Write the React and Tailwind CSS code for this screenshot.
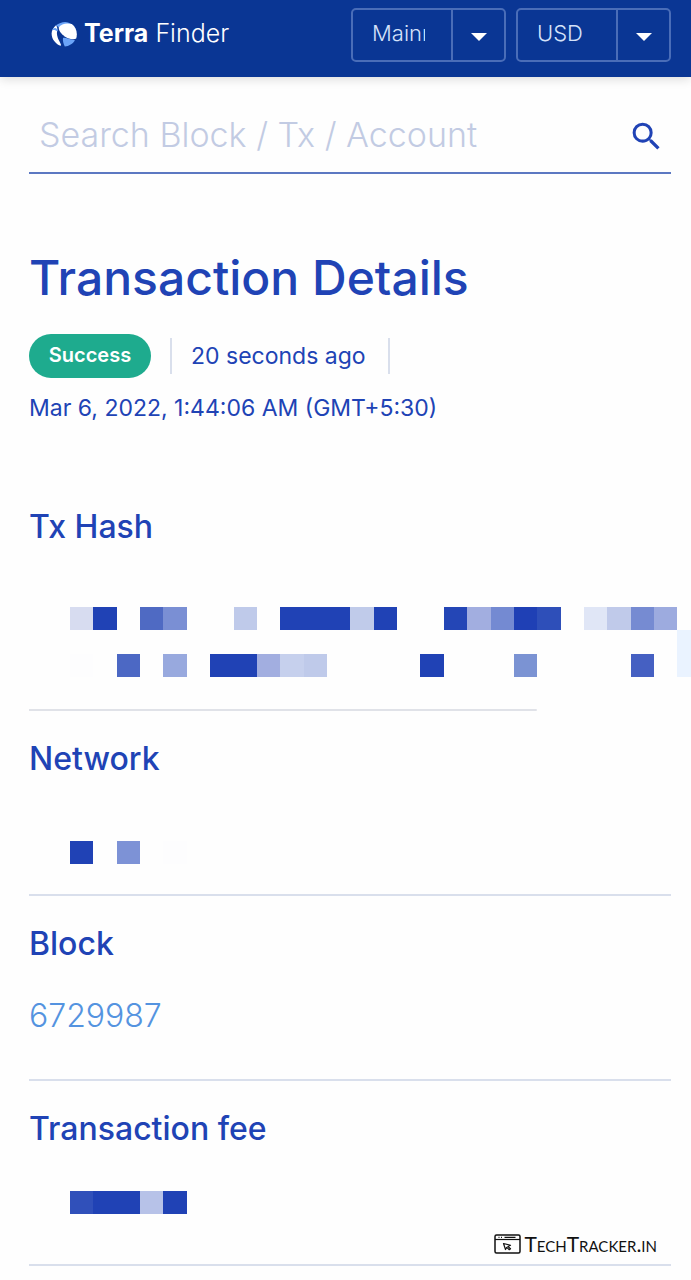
import React from "react";

const CELL = 23.365;
const INK = "#2042b5";

const HASH_CELLS = [
  [0, 0, 1, "#d7dcf0"],
  [1, 0, 1, INK],
  [3, 0, 1, "#4f6ac3"],
  [4, 0, 1, "#7a8fd4"],
  [7, 0, 1, "#bfcaea"],
  [9, 0, 3, INK],
  [12, 0, 1, "#c0cbea"],
  [13, 0, 1, INK],
  [16, 0, 1, "#2446b6"],
  [17, 0, 1, "#a2aee0"],
  [18, 0, 1, "#748ad2"],
  [19, 0, 1, "#1f40b5"],
  [20, 0, 1, "#2e4fb9"],
  [22, 0, 1, "#e0e6f6"],
  [23, 0, 1, "#c0caea"],
  [24, 0, 1, "#768bd2"],
  [25, 0, 1, "#9dabdf"],
  [26, 1, 1, "#eaf3ff"],
  [26, 2, 1, "#eaf3ff"],
  [0, 2, 1, "#fdfdfe"],
  [2, 2, 1, "#4c68c4"],
  [4, 2, 1, "#98a9de"],
  [6, 2, 2, INK],
  [8, 2, 1, "#a2aee0"],
  [9, 2, 1, "#c6d0ed"],
  [10, 2, 1, "#bfcaea"],
  [15, 2, 1, INK],
  [19, 2, 1, "#7b93d3"],
  [24, 2, 1, "#4560c2"],
];

const NETWORK_CELLS = [
  [0, 0, 1, INK],
  [2, 0, 1, "#7d92d6"],
  [4, 0, 1, "#fdfdfe"],
];

const FEE_CELLS = [
  [0, 0, 1, "#3050ba"],
  [1, 0, 2, INK],
  [3, 0, 1, "#b7c2e8"],
  [4, 0, 1, INK],
];

function Mosaic({ cells, cols, rows, label }) {
  return (
    <svg
      className="block shrink-0"
      width={Math.ceil(cols * CELL)}
      height={Math.ceil(rows * CELL)}
      role="img"
      aria-label={label}
      shapeRendering="crispEdges"
    >
      {cells.map(([x, y, span, fill]) => (
        <rect key={`${x}-${y}`} x={x * CELL} y={y * CELL} width={span * CELL} height={CELL} fill={fill} />
      ))}
    </svg>
  );
}

function Logo() {
  return (
    <svg className="size-[26px]" viewBox="0 0 26 26" aria-hidden="true">
      <path d="M5 4.300C10 .2 17 -.4 20.800 3.500 15.500 3 11.500 3.800 8.600 7 7.300 6 6 5.300 5 4.300Z" fill="#6ba4f8" />
      <path d="M7.800 6.300C10 2.800 16 1.400 20.800 3.100 25.300 6.300 26.800 12 25.200 17.600 23.600 19 19 18.400 15 16.300 11 14 7.200 9.800 7.800 6.300Z" fill="#fff" />
      <path d="M12 17C14 16.200 18 18.200 24 19.200 21.900 22.800 18 25.200 13.800 25.400 12.500 23 11.500 19.500 12 17Z" fill="#6ba4f8" />
      <path d="M5 4.300C2.600 6.300.7 9.300.6 12.500.7 15.500 1.600 18 3.200 20 5.200 22.600 7.500 24.300 9.800 24.800 10.800 23.500 8 20.500 6.700 16.500 5.700 13.500 5.800 11 6.300 9 6.500 7 6 5.500 5 4.300Z" fill="#fff" />
      <path d="M2.200 7.600C3.500 6.600 5.300 7 6.700 8.600L6.500 10.600C4.500 9 3 8.600 1.400 9.400Z" fill="#6ba4f8" />
    </svg>
  );
}

function HeaderSelect({ label, options }) {
  return (
    <label className="grid h-[54px] w-[155px] rounded-[5px] border-2 border-[#4a6db8]">
      <span className="sr-only">{label}</span>
      <select className="col-start-1 row-start-1 w-full appearance-none bg-transparent pr-[79px] pb-1 pl-[19px] text-[22px] font-light text-[#d5e2fa] outline-none">
        {options.map((option) => (
          <option key={option}>{option}</option>
        ))}
      </select>
      <span className="pointer-events-none col-start-1 row-start-1 flex w-[53px] items-center justify-center justify-self-end border-l-2 border-[#4a6db8] pt-1">
        <svg width="16" height="8" viewBox="0 0 16 8" aria-hidden="true">
          <path d="M0 0h16L8 8z" fill="#fff" />
        </svg>
      </span>
    </label>
  );
}

function Row({ title, children }) {
  return (
    <section className="relative flex h-[185px] flex-col pt-7">
      <h2 className="text-[32px] leading-10 font-medium">{title}</h2>
      {children}
      <div className="mt-auto h-[2px] bg-[#d9dfec]" />
    </section>
  );
}

function Watermark() {
  return (
    <div className="absolute right-[14px] bottom-[10px] flex items-center gap-[3px] text-[#111]">
      <svg width="27" height="20" viewBox="0 0 27 20" fill="none" stroke="currentColor" aria-hidden="true">
        <rect x="1" y="1" width="25" height="18" rx="1.500" strokeWidth="1.500" />
        <path d="M1 5.500h25" strokeWidth="1.200" />
        <path d="M4.500 3.300h1M7 3.300h1M10.500 3.300h11" strokeWidth="1.200" />
        <path d="M9.500 9.500l7 1.800-2.600 1.200 2.600 2.200-1.200 1-2.600-2.300-1.200 2.100z" strokeWidth="1.200" strokeLinejoin="round" />
      </svg>
      <span className="font-['Lato',sans-serif] text-[21px] leading-6 [font-variant:small-caps]">
        TechTracker.in
      </span>
    </div>
  );
}

export default function App() {
  return (
    <div className="min-h-screen overflow-x-hidden bg-[#fefefe] font-['Inter',sans-serif] text-[#2043b5]">
      <header className="flex h-[77px] justify-between bg-[#0a3694] pt-2 pr-5 pl-[51px] shadow-[0_2px_10px_rgba(0,0,0,0.14)]">
        <a href="#" className="flex h-[52px] items-center gap-[7px] text-[25px] text-white">
          <Logo />
          <span className="whitespace-nowrap">
            <span className="font-bold">Terra</span> <span className="font-light">Finder</span>
          </span>
        </a>
        <div className="flex gap-[10px]">
          <HeaderSelect label="Network" options={["Mainnet", "Testnet"]} />
          <HeaderSelect label="Currency" options={["USD", "KRW"]} />
        </div>
      </header>

      <main className="pr-5 pl-[29px]">
        <form className="mt-5 flex h-[77px] items-center border-b-2 border-[#5c78c2] pr-[6px] pl-[10px]">
          <input
            type="search"
            aria-label="Search"
            placeholder="Search Block / Tx / Account"
            className="min-w-0 flex-1 bg-transparent text-[34px] font-light outline-none placeholder:text-[#c2cbe3]"
          />
          <button type="button" aria-label="Submit search" className="pt-1">
            <svg width="37" height="37" viewBox="0 0 24 24" fill="#2043b5" aria-hidden="true">
              <path d="M15.500 14h-.79l-.28-.27A6.471 6.471 0 0 0 16 9.500 6.500 6.500 0 1 0 9.500 16c1.610 0 3.090-.59 4.230-1.570l.27.28v.79l5 4.990L20.490 19l-4.990-5zm-6 0C7.010 14 5 11.990 5 9.500S7.010 5 9.500 5 14 7.010 14 9.500 11.990 14 9.500 14z" />
            </svg>
          </button>
        </form>

        <h1 className="mt-[74px] text-[48px] leading-[60px] font-medium">Transaction Details</h1>

        <div className="mt-[26px] flex items-center text-[23px] leading-9">
          <span className="flex h-11 w-[122px] items-center justify-center rounded-full bg-[#1eab8e] pb-[2px] text-[20px] font-semibold text-white">
            Success
          </span>
          <span className="ml-[19px] border-x-2 border-[#d9dfec] pr-[22px] pl-[19px]">20 seconds ago</span>
        </div>
        <p className="mt-[14px] text-[23px] leading-8">Mar 6, 2022, 1:44:06 AM (GMT+5:30)</p>

        <section className="mt-[83px] flex h-[204px] flex-col">
          <h2 className="text-[32px] leading-10 font-medium">Tx Hash</h2>
          <div className="-mr-5 mt-[60px] ml-[41px] overflow-hidden">
            <Mosaic cells={HASH_CELLS} cols={27} rows={3} label="Hidden transaction hash" />
          </div>
          <div className="mt-auto mr-[134px] h-[2px] rounded-r-full bg-[#e0e2e8]" />
        </section>

        <Row title="Network">
          <div className="mt-[62px] ml-[41px]">
            <Mosaic cells={NETWORK_CELLS} cols={5} rows={1} label="Hidden network" />
          </div>
        </Row>

        <Row title="Block">
          <a href="#" className="mt-8 text-[32px] leading-10 font-light text-[#5493e0]">
            6729987
          </a>
        </Row>

        <Row title="Transaction fee">
          <div className="mt-[42px] ml-[41px]">
            <Mosaic cells={FEE_CELLS} cols={5} rows={1} label="Hidden fee" />
          </div>
          <Watermark />
        </Row>
      </main>
    </div>
  );
}
